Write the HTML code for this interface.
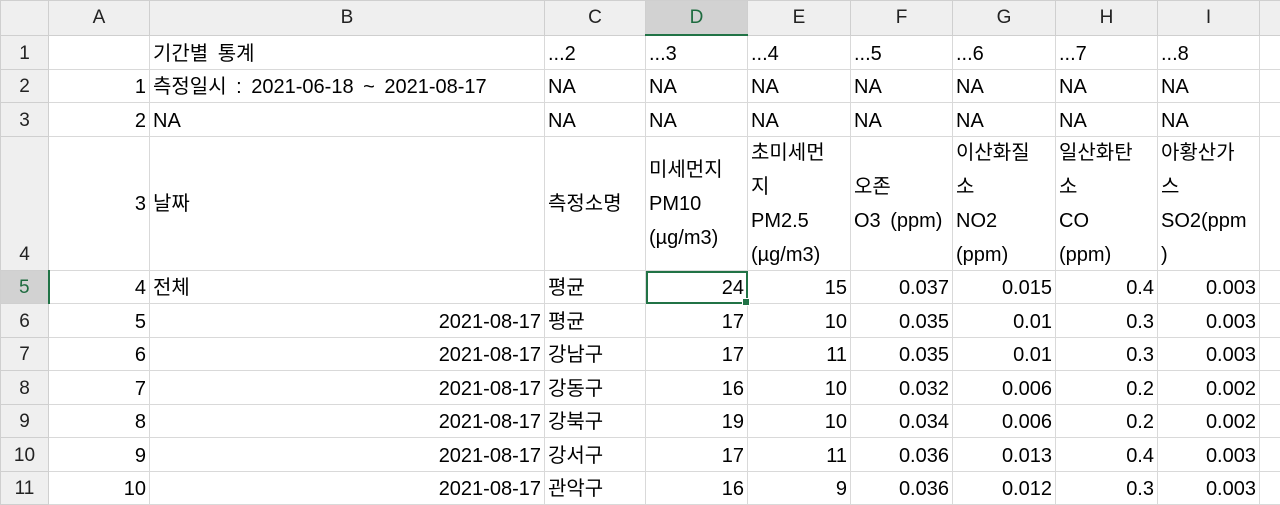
<!DOCTYPE html>
<html><head><meta charset="utf-8"><style>
body{margin:0;width:1280px;height:504px;overflow:hidden;background:#fff;font-family:"Liberation Sans","Noto Sans CJK KR",sans-serif;}
table{border-collapse:collapse;table-layout:fixed;width:1280px;font-size:20px;color:#000;}
td{border:1px solid #d9d9d9;padding:0;white-space:nowrap;overflow:hidden;vertical-align:top;}
td>div{overflow:hidden;display:flex;flex-direction:column;justify-content:flex-end;padding:0 3px;line-height:30px;word-spacing:4px;}
.h33 td>div{height:32px;}
.h34 td>div{height:33px;}
.h35 td>div{height:33px;}
.h134 td>div{height:133px;justify-content:center;line-height:34px;}
td.r>div{align-items:flex-end;text-align:right;}
tr.h td{background:#efefef;border-color:#cfcfcf;color:#222;font-size:19px;}
tr.h td>div{justify-content:center;align-items:center;}
td.rh{background:#efefef;border-color:#cfcfcf;color:#222;font-size:19px;}
td.rh>div{align-items:center;justify-content:flex-end;line-height:30px;}
.h134 td.rh>div{justify-content:flex-end;line-height:30px;}
tr.h td.sel{background:#d2d2d2;border-bottom:2px solid #217346;color:#1e6b3f;}
td.rsel{background:#d2d2d2 !important;border-right:2px solid #217346;color:#1e6b3f !important;}
td.cur{outline:2px solid #217346;outline-offset:-2px;position:relative;overflow:visible;}
td.cur:after{content:"";position:absolute;right:-3px;bottom:-3px;width:6px;height:6px;background:#217346;border:1px solid #fff;}
</style></head><body>
<table>
<colgroup><col style="width:48px"><col style="width:101px"><col style="width:395px"><col style="width:101px"><col style="width:102px"><col style="width:103px"><col style="width:102px"><col style="width:103px"><col style="width:102px"><col style="width:102px"><col style="width:21px"></colgroup>
<tr class="h h35"><td><div></div></td><td><div>A</div></td><td><div>B</div></td><td><div>C</div></td><td class="sel"><div>D</div></td><td><div>E</div></td><td><div>F</div></td><td><div>G</div></td><td><div>H</div></td><td><div>I</div></td><td><div></div></td></tr>
<tr class="h34"><td class="rh"><div>1</div></td><td><div></div></td><td><div>기간별 통계</div></td><td><div>...2</div></td><td><div>...3</div></td><td><div>...4</div></td><td><div>...5</div></td><td><div>...6</div></td><td><div>...7</div></td><td><div>...8</div></td><td><div></div></td></tr>
<tr class="h33"><td class="rh"><div>2</div></td><td class="r"><div>1</div></td><td><div>측정일시 : 2021-06-18 ~ 2021-08-17</div></td><td><div>NA</div></td><td><div>NA</div></td><td><div>NA</div></td><td><div>NA</div></td><td><div>NA</div></td><td><div>NA</div></td><td><div>NA</div></td><td><div></div></td></tr>
<tr class="h34"><td class="rh"><div>3</div></td><td class="r"><div>2</div></td><td><div>NA</div></td><td><div>NA</div></td><td><div>NA</div></td><td><div>NA</div></td><td><div>NA</div></td><td><div>NA</div></td><td><div>NA</div></td><td><div>NA</div></td><td><div></div></td></tr>
<tr class="h134"><td class="rh"><div>4</div></td><td class="r"><div>3</div></td><td><div>날짜</div></td><td><div>측정소명</div></td><td><div><span>미세먼지</span><span>PM10</span><span>(µg/m3)</span></div></td><td><div><span>초미세먼</span><span>지</span><span>PM2.5</span><span>(µg/m3)</span></div></td><td><div><span>오존</span><span>O3 (ppm)</span></div></td><td><div><span>이산화질</span><span>소</span><span>NO2</span><span>(ppm)</span></div></td><td><div><span>일산화탄</span><span>소</span><span>CO</span><span>(ppm)</span></div></td><td><div><span>아황산가</span><span>스</span><span>SO2(ppm</span><span>)</span></div></td><td><div></div></td></tr>
<tr class="h33"><td class="rh rsel"><div>5</div></td><td class="r"><div>4</div></td><td><div>전체</div></td><td><div>평균</div></td><td class="r cur"><div>24</div></td><td class="r"><div>15</div></td><td class="r"><div>0.037</div></td><td class="r"><div>0.015</div></td><td class="r"><div>0.4</div></td><td class="r"><div>0.003</div></td><td><div></div></td></tr>
<tr class="h34"><td class="rh"><div>6</div></td><td class="r"><div>5</div></td><td class="r"><div>2021-08-17</div></td><td><div>평균</div></td><td class="r"><div>17</div></td><td class="r"><div>10</div></td><td class="r"><div>0.035</div></td><td class="r"><div>0.01</div></td><td class="r"><div>0.3</div></td><td class="r"><div>0.003</div></td><td><div></div></td></tr>
<tr class="h33"><td class="rh"><div>7</div></td><td class="r"><div>6</div></td><td class="r"><div>2021-08-17</div></td><td><div>강남구</div></td><td class="r"><div>17</div></td><td class="r"><div>11</div></td><td class="r"><div>0.035</div></td><td class="r"><div>0.01</div></td><td class="r"><div>0.3</div></td><td class="r"><div>0.003</div></td><td><div></div></td></tr>
<tr class="h34"><td class="rh"><div>8</div></td><td class="r"><div>7</div></td><td class="r"><div>2021-08-17</div></td><td><div>강동구</div></td><td class="r"><div>16</div></td><td class="r"><div>10</div></td><td class="r"><div>0.032</div></td><td class="r"><div>0.006</div></td><td class="r"><div>0.2</div></td><td class="r"><div>0.002</div></td><td><div></div></td></tr>
<tr class="h33"><td class="rh"><div>9</div></td><td class="r"><div>8</div></td><td class="r"><div>2021-08-17</div></td><td><div>강북구</div></td><td class="r"><div>19</div></td><td class="r"><div>10</div></td><td class="r"><div>0.034</div></td><td class="r"><div>0.006</div></td><td class="r"><div>0.2</div></td><td class="r"><div>0.002</div></td><td><div></div></td></tr>
<tr class="h34"><td class="rh"><div>10</div></td><td class="r"><div>9</div></td><td class="r"><div>2021-08-17</div></td><td><div>강서구</div></td><td class="r"><div>17</div></td><td class="r"><div>11</div></td><td class="r"><div>0.036</div></td><td class="r"><div>0.013</div></td><td class="r"><div>0.4</div></td><td class="r"><div>0.003</div></td><td><div></div></td></tr>
<tr class="h33"><td class="rh"><div>11</div></td><td class="r"><div>10</div></td><td class="r"><div>2021-08-17</div></td><td><div>관악구</div></td><td class="r"><div>16</div></td><td class="r"><div>9</div></td><td class="r"><div>0.036</div></td><td class="r"><div>0.012</div></td><td class="r"><div>0.3</div></td><td class="r"><div>0.003</div></td><td><div></div></td></tr>
</table>
</body></html>
